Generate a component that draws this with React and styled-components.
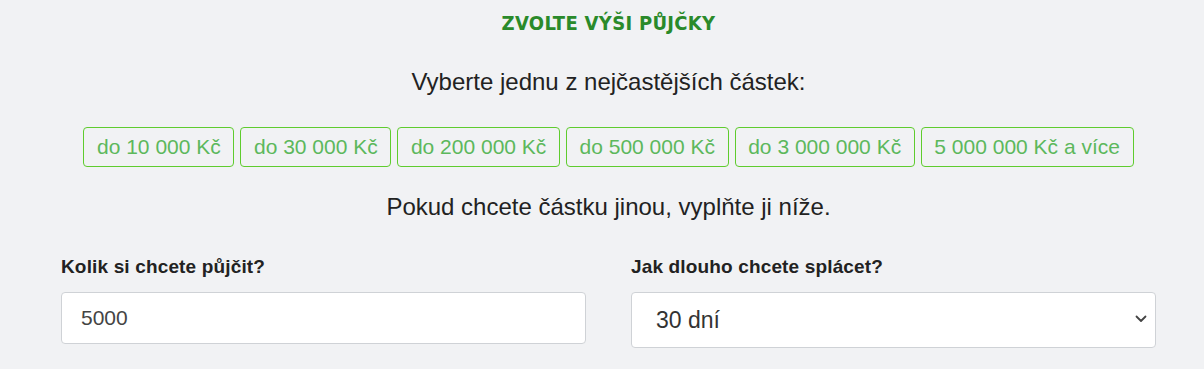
import React, { useState } from "react";
import styled, { createGlobalStyle } from "styled-components";

const amounts = [
	"do 10 000 Kč",
	"do 30 000 Kč",
	"do 200 000 Kč",
	"do 500 000 Kč",
	"do 3 000 000 Kč",
	"5 000 000 Kč a více",
];

const App = () => {
	const [amount, setAmount] = useState("5000");
	const [term, setTerm] = useState("30");

	return (
		<>
			<GlobalStyle />
			<Wrapper>
				<Title>Zvolte výši půjčky</Title>
				<Lead>Vyberte jednu z nejčastějších částek:</Lead>
				<Chips>
					{amounts.map((a) => (
						<Chip key={a} type="button">
							{a}
						</Chip>
					))}
				</Chips>
				<Lead $top={26}>Pokud chcete částku jinou, vyplňte ji níže.</Lead>
				<Fields>
					<Field>
						<Label>Kolik si chcete půjčit?</Label>
						<Input value={amount} onChange={(e) => setAmount(e.target.value)} />
					</Field>
					<Field>
						<Label>Jak dlouho chcete splácet?</Label>
						<SelectBox>
							<Select value={term} onChange={(e) => setTerm(e.target.value)}>
								<option value="30">30 dní</option>
								<option value="60">60 dní</option>
								<option value="90">90 dní</option>
							</Select>
							<Chevron viewBox="0 0 12 8" aria-hidden="true">
								<path d="M1.5 1.5 L6 6 L10.5 1.5" />
							</Chevron>
						</SelectBox>
					</Field>
				</Fields>
			</Wrapper>
		</>
	);
};

export default App;

const GlobalStyle = createGlobalStyle`
	html, body {
		margin: 0;
		background: #f1f2f4;
	}
	body {
		padding: 0 0 0 13px;
		font-family: "Liberation Sans", Arial, sans-serif;
		color: #222;
	}
`;

const Wrapper = styled.div`
	width: 1095px;
	margin: 0 auto;
	padding-top: 12px;
	display: flex;
	flex-direction: column;
	align-items: center;
`;

const Title = styled.h2`
	margin: 0;
	font-family: "Liberation Sans Narrow", "DejaVu Sans Condensed", "Liberation Sans", sans-serif;
	font-weight: 700;
	font-size: 20px;
	line-height: 22px;
	letter-spacing: 0.3px;
	text-transform: uppercase;
	color: #2a8a2a;
`;

const Lead = styled.p`
	margin: ${(p) => p.$top ?? 34}px 0 0;
	font-size: 24px;
	line-height: 28px;
	color: #222;
`;

const Chips = styled.div`
	margin-top: 31px;
	display: flex;
	gap: 6px;
	justify-content: center;
`;

const Chip = styled.button`
	height: 40px;
	padding: 0 12.6px;
	background: transparent;
	border: 1px solid #5fcc2e;
	border-radius: 4px;
	font-family: "Liberation Sans", Arial, sans-serif;
	font-size: 21px;
	color: #5cb85c;
	cursor: pointer;
	&:hover {
		background: #5cb85c;
		color: #fff;
	}
`;

const Fields = styled.div`
	margin-top: 35px;
	width: 100%;
	display: grid;
	grid-template-columns: 1fr 1fr;
	column-gap: 45px;
	align-items: start;
`;

const Field = styled.div`
	display: flex;
	flex-direction: column;
`;

const Label = styled.label`
	font-size: 19px;
	font-weight: 700;
	line-height: 22px;
	letter-spacing: 0.15px;
	color: #222;
	margin-bottom: 14px;
`;

const Input = styled.input`
	box-sizing: border-box;
	height: 52px;
	padding: 0 19px;
	background: #fff;
	border: 1px solid #cfd2d6;
	border-radius: 4px;
	font-family: "Liberation Sans", Arial, sans-serif;
	font-size: 21px;
	color: #444;
	outline: none;
`;

const SelectBox = styled.div`
	position: relative;
`;

const Select = styled.select`
	box-sizing: border-box;
	width: 100%;
	height: 56px;
	padding: 0 40px 0 24px;
	appearance: none;
	background: #fff;
	border: 1px solid #cfd2d6;
	border-radius: 4px;
	font-family: "Liberation Sans", Arial, sans-serif;
	font-size: 23px;
	color: #333;
	outline: none;
`;

const Chevron = styled.svg`
	position: absolute;
	right: 9px;
	top: 23px;
	width: 12px;
	height: 8px;
	fill: none;
	stroke: #444;
	stroke-width: 1.8;
	stroke-linecap: round;
	stroke-linejoin: round;
	pointer-events: none;
`;
